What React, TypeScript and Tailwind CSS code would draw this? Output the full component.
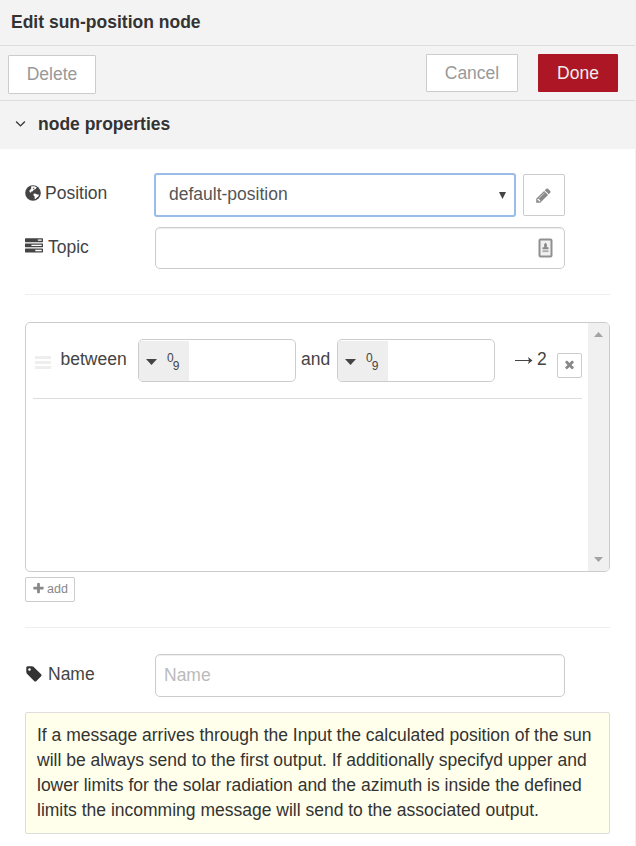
import React from "react";

type IconProps = { d: string; className: string };

const Icon = ({ d, className }: IconProps) => (
  <svg viewBox="0 0 1792 1792" fill="currentColor" className={`shrink-0 ${className}`}>
    <path d={d} />
  </svg>
);

const pencil =
  "M491 1536l91-91-235-235-91 91v107h128v128h107zm523-928q0-22-22-22-10 0-17 7l-542 542q-7 7-7 17 0 22 22 22 10 0 17-7l542-542q7-7 7-17zm-54-192l416 416-832 832h-416v-416zm683 96q0 53-37 90l-166 166-416-416 166-165q36-38 90-38 53 0 91 38l235 234q37 39 37 91z";
const tag =
  "M576 448q0-53-37.5-90.5t-90.5-37.5-90.5 37.5-37.5 90.5 37.5 90.5 90.5 37.5 90.5-37.5 37.5-90.5zm1067 576q0 53-37 90l-491 492q-39 37-91 37-53 0-90-37l-715-716q-38-37-64.5-101t-26.5-117v-416q0-52 38-90t90-38h416q53 0 117 26.5t102 64.5l715 714q37 39 37 91z";
const times =
  "M1490 1322q0 40-28 68l-136 136q-28 28-68 28t-68-28l-294-294-294 294q-28 28-68 28t-68-28l-136-136q-28-28-28-68t28-68l294-294-294-294q-28-28-28-68t28-68l136-136q28-28 68-28t68 28l294 294 294-294q28-28 68-28t68 28l136 136q28 28 28 68t-28 68l-294 294 294 294q28 28 28 68z";
const plus =
  "M1600 736v192q0 40-28 68t-68 28h-416v416q0 40-28 68t-68 28h-192q-40 0-68-28t-28-68v-416h-416q-40 0-68-28t-28-68v-192q0-40 28-68t68-28h416v-416q0-40 28-68t68-28h192q40 0 68 28t28 68v416h416q40 0 68 28t28 68z";
const tasks =
  "M1024 1408h640v-128h-640v128zm-384-512h1024v-128h-1024v128zm640-512h384v-128h-384v128zm512 832v256q0 26-19 45t-45 19h-1664q-26 0-45-19t-19-45v-256q0-26 19-45t45-19h1664q26 0 45 19t19 45zm0-512v256q0 26-19 45t-45 19h-1664q-26 0-45-19t-19-45v-256q0-26 19-45t45-19h1664q26 0 45 19t19 45zm0-512v256q0 26-19 45t-45 19h-1664q-26 0-45-19t-19-45v-256q0-26 19-45t45-19h1664q26 0 45 19t19 45z";
const angleDown =
  "M1395 736q0 13-10 23l-466 466q-10 10-23 10t-23-10l-466-466q-10-10-10-23t10-23l50-50q10-10 23-10t23 10l393 393 393-393q10-10 23-10t23 10l50 50q10 10 10 23z";

const Globe = () => (
  <svg viewBox="0 0 16 16" className="size-4 shrink-0">
    <circle cx="8" cy="8" r="7.8" fill="#444" />
    <path
      d="M6.300 1.300 9.300 1.200l2.400 1-1 1.700-2 .8-.9 1.500-1.500.4-.3 1.200-1.500-.8.1-1.700 1.500-1.200z"
      fill="#fff"
    />
    <path d="m8.600 8.700 1.600-.3 1.900 1 1.800.2-.4 1.600-2.100 1.900-1.400 1.100-.5-.9.2-1.700-1.300-1.400z" fill="#fff" />
    <path d="m7.700 3.200 1.200-.6.6.6-1 .8z" fill="#444" />
  </svg>
);

const TypedInput = () => (
  <div className="flex h-[43px] w-[158px] overflow-hidden rounded-[5px] border border-[#ccc] bg-white pt-px">
    <div className="flex w-[50px] shrink-0 bg-[#eee] text-[#444]">
      <svg viewBox="0 0 11 6" className="mt-[18px] ml-[7px] h-1.5 w-[11px]" fill="currentColor">
        <path d="M0 0h11L5.5 6z" />
      </svg>
      <div className="ml-[10px] flex pt-[10px] text-[12px] leading-[14px]">
        <span>0</span>
        <span className="-ml-px pt-2">9</span>
      </div>
    </div>
  </div>
);

export default function App() {
  return (
    <div className="flex h-[846px] w-[636px] flex-col overflow-hidden border-r border-[#f0f0f0] bg-white font-['Liberation_Sans',Arial,sans-serif] text-[17.5px] leading-[25px] text-[#444]">
      <header className="h-[46px] shrink-0 border-b border-[#ddd] bg-[#f3f3f3] pt-[10px] pl-[11px] font-bold text-[#333]">
        Edit sun-position node
      </header>
      <div className="flex h-[55px] shrink-0 items-start border-b border-[#ddd] bg-[#f3f3f3] pl-2 text-[#999]">
        <button className="mt-[9px] h-[39px] w-[88px] rounded-[1px] border border-[#ccc] bg-white">Delete</button>
        <button className="mt-2 ml-[330px] h-[38px] w-[92px] rounded-[1px] border border-[#ccc] bg-white">Cancel</button>
        <button className="mt-2 ml-5 h-[38px] w-20 rounded-[1px] bg-[#ad1625] text-[#eee]">Done</button>
      </div>
      <div className="flex h-12 shrink-0 bg-[#f3f3f3] pt-[11px] pl-3 font-bold text-[#333]">
        <Icon d={angleDown} className="mt-[3px] size-[17px]" />
        <span className="ml-[9px]">node properties</span>
      </div>

      <main className="flex flex-col pt-6 pl-[25px]">
        <div className="flex h-[44px]">
          <div className="flex w-[129px] pt-2">
            <span className="pt-1"><Globe /></span>
            <span className="ml-1">Position</span>
          </div>
          <div className="flex h-[44px] w-[362px] justify-between rounded-[3px] border-2 border-[#9bbbe8] pt-[7px] pr-[8px] pl-[13px] text-[#555]">
            <span>default-position</span>
            <svg viewBox="0 0 7 7" className="mt-[10px] h-[7px] w-[7px]" fill="#444">
              <path d="M0 0h7L3.5 7z" />
            </svg>
          </div>
          <button className="mt-px ml-[7px] flex h-[42px] w-[42px] items-center justify-center rounded-[2px] border border-[#ccc] pr-px text-[#888]">
            <Icon d={pencil} className="size-[17px]" />
          </button>
        </div>
        <div className="mt-[10px] flex">
          <div className="flex w-[130px] pt-2">
            <Icon d={tasks} className="mt-[2px] size-[18px]" />
            <span className="ml-[5px]">Topic</span>
          </div>
          <div className="flex h-[42px] w-[410px] items-center justify-end rounded-[5px] border border-[#ccc] pr-[11px] shadow-[inset_0_1px_1px_rgba(0,0,0,0.075)]">
            <svg viewBox="0 0 15 20" className="h-5 w-[15px]">
              <rect x="1.500" y="1.500" width="12" height="17" rx="1" fill="#f0f0f0" stroke="#909090" strokeWidth="2" />
              <path d="M7.500 4.500 9 6.800l-.3 2.500h1.800v2h-6v-2h1.800L6 6.800z" fill="#888" />
              <path d="M4.500 12.300h6v1.800h-6z" fill="#aaa" />
            </svg>
          </div>
        </div>
        <hr className="mt-[25px] w-[585px] border-[#eee]" />

        <section className="mt-[27px] flex h-[250px] w-[585px] overflow-hidden rounded-[5px] border border-[#ccc]">
          <div className="w-[562px] shrink-0 pl-[7px]">
            <div className="flex h-[76px] w-[549px] items-start border-b border-[#ddd] pt-4">
              <div className="mt-[17px] ml-[2px] flex w-4 flex-col gap-[2px]">
                <span className="h-[3px] bg-[#eee]" />
                <span className="h-[3px] bg-[#eee]" />
                <span className="h-[3px] bg-[#eee]" />
              </div>
              <span className="mt-2 ml-[9.5px] w-[77.5px]">between</span>
              <TypedInput />
              <span className="mt-2 ml-[5px] w-9">and</span>
              <TypedInput />
              <svg viewBox="0 0 18 8" className="mt-[17px] ml-5 h-2 w-[18px]" fill="none" stroke="#444">
                <path d="M0 4.500h16" />
                <path d="m13 1 4.500 3.500L13 8l1-3.500z" fill="#444" stroke="none" />
              </svg>
              <span className="mt-2 ml-1">2</span>
              <button className="mt-[14px] ml-auto flex h-[25px] w-[25px] items-center justify-center rounded-[2px] border border-[#ccc] pb-[3px] text-[#888]">
                <Icon d={times} className="size-[13px]" />
              </button>
            </div>
          </div>
          <div className="flex w-[21px] flex-col items-center justify-between bg-[#f0f0f0] pt-[9px] pb-[9px] text-[#a3a3a3]">
            <svg viewBox="0 0 9 5" className="h-[5px] w-[9px]" fill="currentColor"><path d="m0 5 4.500-5L9 5z" /></svg>
            <svg viewBox="0 0 9 5" className="h-[5px] w-[9px]" fill="currentColor"><path d="m0 0 4.500 5L9 0z" /></svg>
          </div>
        </section>
        <button className="mt-[5px] flex h-[25px] w-[50px] rounded-[2px] border border-[#ccc] pl-[6px] text-[12.5px] leading-[22px] text-[#888]">
          <Icon d={plus} className="mt-1 size-[13px]" />
          <span className="ml-[2px]">add</span>
        </button>
        <hr className="mt-[25px] w-[585px] border-[#eee]" />

        <div className="mt-[26px] flex">
          <div className="flex w-[130px] pt-2">
            <Icon d={tag} className="mt-[3px] size-[18px] text-[#333]" />
            <span className="ml-[5px]">Name</span>
          </div>
          <div className="h-[43px] w-[410px] rounded-[5px] border border-[#ccc] pt-2 pl-2 text-[#bbb] shadow-[inset_0_1px_1px_rgba(0,0,0,0.075)]">
            Name
          </div>
        </div>
        <div className="mt-[15px] h-[122px] w-[585px] rounded-[2px] border border-[#ddd] bg-[#ffffeb] pt-[10px] pl-[11px] whitespace-nowrap text-[#333]">
          <p>If a message arrives through the Input the calculated position of the sun</p>
          <p>will be always send to the first output. If additionally specifyd upper and</p>
          <p>lower limits for the solar radiation and the azimuth is inside the defined</p>
          <p>limits the incomming message will send to the associated output.</p>
        </div>
      </main>
    </div>
  );
}
